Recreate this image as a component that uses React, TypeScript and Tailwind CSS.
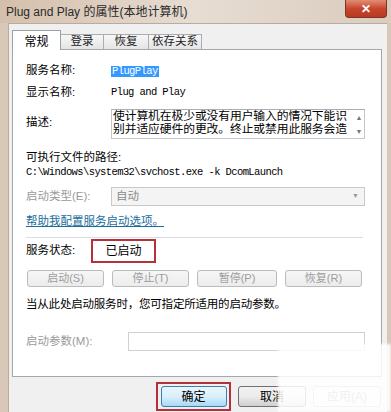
const font = "font-['Liberation_Sans','Noto_Sans_CJK_SC',sans-serif]";
const mono = "font-['Liberation_Mono','Noto_Sans_CJK_SC',monospace] text-[10.5px] tracking-[-0.6px]";

function Tab({ label, active, w }: { label: string; active?: boolean; w: string }) {
  if (active) {
    return (
      <div
        className={`relative z-10 -mb-px flex h-[20px] items-start justify-center border border-b-0 border-[#9ba1a8] bg-white pt-[2px] text-[12px] ${w}`}
      >
        {label}
      </div>
    );
  }
  return (
    <div
      className={`-ml-px flex h-[15px] items-center justify-center border border-b-0 border-[#a9adb3] bg-gradient-to-b from-[#f7f7f7] to-[#e4e4e4] text-[11.5px] text-[#222] ${w}`}
    >
      {label}
    </div>
  );
}

function DisabledButton({ label, w = "w-[77px]" }: { label: string; w?: string }) {
  return (
    <div
      className={`flex h-[17px] items-center justify-center rounded-[3px] border border-[#b9bcbf] bg-gradient-to-b from-[#f6f6f6] to-[#ececec] text-[11px] text-[#9d9d9d] ${w}`}
    >
      {label}
    </div>
  );
}

export default function App() {
  return (
    <div className={`relative h-[412px] w-[391px] overflow-hidden bg-[#d9c8b7] text-black ${font}`}>
      {/* title bar */}
      <div className="relative flex h-[23px] items-center bg-gradient-to-r from-[#d4bfab] via-[#e7ddd3] to-[#dacbbd] pl-[6px] text-[12px] text-[#2a2a2a]">
        Plug and Play 的属性(本地计算机)
        <div className="absolute right-[4px] top-0 flex h-[18px] w-[42px] items-center justify-center rounded-b-[4px] border border-t-0 border-[#7e3424] bg-gradient-to-b from-[#e08d74] via-[#c8462c] to-[#b63a22] text-[12px] font-bold text-white">
          ✕
        </div>
      </div>

      {/* client area */}
      <div className="ml-[8px] h-[389px] w-[379px] border-l border-t border-[#b9ab9e] bg-[#f0f0f0] pl-[3px] pt-[6px]">
        <div className="flex items-end">
          <Tab label="常规" active w="w-[49px]" />
          <Tab label="登录" w="w-[44px]" />
          <Tab label="恢复" w="w-[46px]" />
          <Tab label="依存关系" w="w-[54px]" />
        </div>

        <div className="h-[328px] w-[370px] border border-[#a3a8ae] bg-white pl-[13px] text-[11.5px]">
          {/* service name */}
          <div className="mt-[11px] flex h-[20px] items-center">
            <div className="w-[85px]">服务名称:</div>
            <span className={`bg-[#3399ff] px-[1px] leading-[11px] text-white ${mono}`}>PlugPlay</span>
          </div>
          <div className="mt-[2px] flex h-[20px] items-center">
            <div className="w-[85px]">显示名称:</div>
            <span className={mono}>Plug and Play</span>
          </div>
          <div className="mt-[6px] flex h-[30px] items-start">
            <div className="w-[85px] pt-[5px]">描述:</div>
            <div className="flex h-[30px] w-[254px] border border-[#c3c6ca] border-t-[#abadb3]">
              <div className="flex-1 overflow-hidden pl-[1px] text-[11.8px] leading-[13px] tracking-[-0.1px]">
                <div className="whitespace-nowrap">使计算机在极少或没有用户输入的情况下能识</div>
                <div className="whitespace-nowrap">别并适应硬件的更改。终止或禁用此服务会造</div>
              </div>
              <div className="flex w-[10px] flex-col items-center justify-around text-[7px] leading-none text-[#777]">
                <span>▲</span>
                <span>▼</span>
              </div>
            </div>
          </div>

          <div className="mt-[12px] flex h-[14px] items-center">可执行文件的路径:</div>
          <div className={`mt-[1px] flex h-[14px] items-center ${mono}`}>
            C:\Windows\system32\svchost.exe -k DcomLaunch
          </div>

          <div className="mt-[7px] flex h-[19px] items-center">
            <div className="w-[85px] text-[#9a9a9a]">启动类型(E):</div>
            <div className="flex h-[19px] w-[254px] items-center justify-between border border-[#c8c8c8] bg-[#f4f4f4] pl-[4px] pr-[5px] text-[#8a8a8a]">
              <span>自动</span>
              <span className="text-[7px] text-[#9a9a9a]">▼</span>
            </div>
          </div>

          <div className="mt-[9px] flex h-[14px] items-center">
            <span className="text-[#1c6d9c] underline">帮助我配置服务启动选项。</span>
          </div>

          <div className="mt-[8px] h-px w-[337px] bg-[#d7dde1]" />

          <div className="mt-px flex h-[24px] items-center">
            <div className="w-[65px]">服务状态:</div>
            <div className="flex h-[24px] w-[65px] items-center justify-center border-2 border-[#b3323a] text-[12px]">
              已启动
            </div>
          </div>

          <div className="ml-px mt-[7px] flex gap-[8px]">
            <DisabledButton label="启动(S)" />
            <DisabledButton label="停止(T)" />
            <DisabledButton label="暂停(P)" w="w-[80px]" />
            <DisabledButton label="恢复(R)" />
          </div>

          <div className="mt-[11px] flex h-[14px] items-center tracking-[-0.2px]">
            当从此处启动服务时，您可指定所适用的启动参数。
          </div>

          <div className="mt-[20px] flex h-[19px] items-center">
            <div className="w-[102px] text-[#9a9a9a]">启动参数(M):</div>
            <div className="h-[19px] w-[237px] border border-[#cfd1d4] bg-white" />
          </div>
        </div>

        {/* dialog buttons */}
        <div className="ml-[144px] mt-[5px] flex items-start gap-[7px]">
          <div className="flex h-[29px] w-[75px] items-center justify-center border-2 border-[#b3323a] bg-[#f0f0f0]">
            <div className="flex h-[21px] w-[66px] items-center justify-center rounded-[3px] border border-[#3c7fb1] bg-gradient-to-b from-[#eaf6fd] via-[#d9f0fc] to-[#a7d9f5] text-[12px]">
              确定
            </div>
          </div>
          <div className="mt-[4px] flex h-[21px] w-[68px] items-center justify-center rounded-[3px] border border-[#707070] bg-gradient-to-b from-[#f2f2f2] via-[#ebebeb] to-[#cfcfcf] text-[12px]">
            取消
          </div>
          <div className="mt-[4px] flex h-[21px] w-[68px] items-center justify-center rounded-[3px] border border-[#adb2b5] bg-[#f4f4f4] text-[12px] text-[#9a9a9a]">
            应用(A)
          </div>
        </div>
      </div>

      {/* watermark */}
      <div className="absolute left-[278px] top-[344px] h-[68px] w-[113px] bg-white/85 blur-[1px]" />
    </div>
  );
}
